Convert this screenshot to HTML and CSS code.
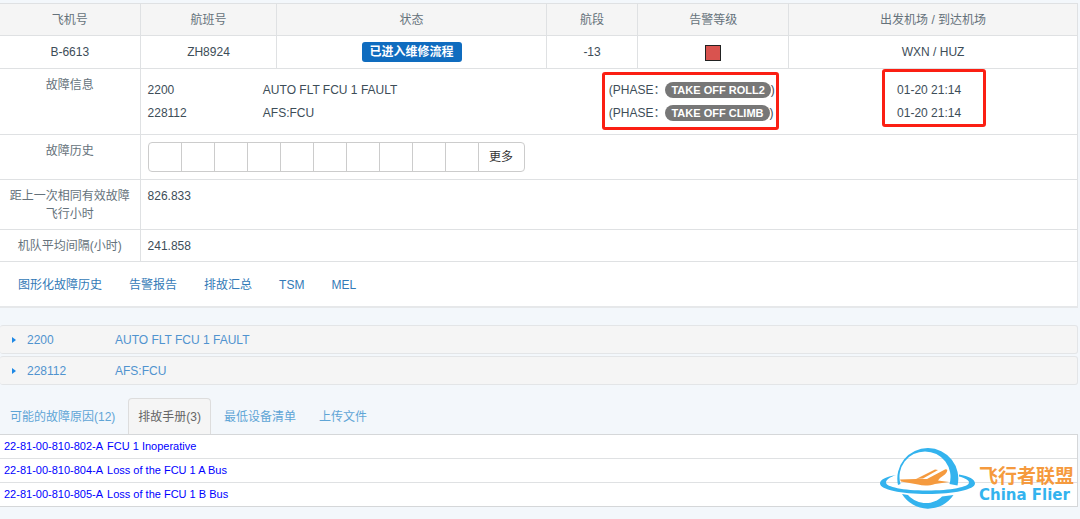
FILE: index.html
```
<!doctype html>
<html lang="zh-CN">
  <head>
    <meta charset="UTF-8" />
    <meta name="viewport" content="width=device-width, initial-scale=1.0" />
    <title>B-6613 故障信息</title>
    <link rel="stylesheet" href="styles.css">
  </head>
  <body>
    <main class="page">
      <table class="fault-table">
        <colgroup>
          <col class="col-plane">
          <col class="col-flight">
          <col class="col-status">
          <col class="col-leg">
          <col class="col-level">
          <col class="col-airport">
        </colgroup>
        <thead>
          <tr>
            <th scope="col">飞机号</th>
            <th scope="col">航班号</th>
            <th scope="col">状态</th>
            <th scope="col">航段</th>
            <th scope="col">告警等级</th>
            <th scope="col">出发机场 / 到达机场</th>
          </tr>
        </thead>
        <tbody>
          <tr class="summary">
            <td>B-6613</td>
            <td>ZH8924</td>
            <td><span class="status-label">已进入维修流程</span></td>
            <td>-13</td>
            <td><span class="level-box"></span></td>
            <td>WXN / HUZ</td>
          </tr>
          <tr>
            <th scope="row">故障信息</th>
            <td colspan="5">
              <div class="fault-info">
                <div>
                  <p>2200</p>
                  <p>228112</p>
                </div>
                <div>
                  <p>AUTO FLT FCU 1 FAULT</p>
                  <p>AFS:FCU</p>
                </div>
                <div>
                  <div class="marked marked-phase">
                    <p>(PHASE：<span class="badge">TAKE OFF ROLL2</span>)</p>
                    <p>(PHASE：<span class="badge">TAKE OFF CLIMB</span>)</p>
                  </div>
                </div>
                <div>
                  <div class="marked marked-time">
                    <p>01-20 21:14</p>
                    <p>01-20 21:14</p>
                  </div>
                </div>
              </div>
            </td>
          </tr>
          <tr>
            <th scope="row">故障历史</th>
            <td colspan="5">
              <div class="btn-group">
                <button type="button" aria-label="1"></button>
                <button type="button" aria-label="2"></button>
                <button type="button" aria-label="3"></button>
                <button type="button" aria-label="4"></button>
                <button type="button" aria-label="5"></button>
                <button type="button" aria-label="6"></button>
                <button type="button" aria-label="7"></button>
                <button type="button" aria-label="8"></button>
                <button type="button" aria-label="9"></button>
                <button type="button" aria-label="10"></button>
                <button type="button" class="more">更多</button>
              </div>
            </td>
          </tr>
          <tr>
            <th scope="row">距上一次相同有效故障飞行小时</th>
            <td colspan="5">826.833</td>
          </tr>
          <tr>
            <th scope="row">机队平均间隔(小时)</th>
            <td colspan="5">241.858</td>
          </tr>
        </tbody>
      </table>
      <nav class="links">
        <a href="#">图形化故障历史</a>
        <a href="#">告警报告</a>
        <a href="#">排故汇总</a>
        <a href="#">TSM</a>
        <a href="#">MEL</a>
      </nav>

      <section class="accordion">
        <details>
          <summary><span class="code">2200</span>AUTO FLT FCU 1 FAULT</summary>
        </details>
        <details>
          <summary><span class="code">228112</span>AFS:FCU</summary>
        </details>
      </section>

      <nav class="tabs">
        <a href="#">可能的故障原因(12)</a>
        <a href="#" class="active">排故手册(3)</a>
        <a href="#">最低设备清单</a>
        <a href="#">上传文件</a>
      </nav>
      <div class="manual">
        <ul>
          <li><a href="#"><span>22-81-00-810-802-A</span><span>FCU 1 Inoperative</span></a></li>
          <li><a href="#"><span>22-81-00-810-804-A</span><span>Loss of the FCU 1 A Bus</span></a></li>
          <li><a href="#"><span>22-81-00-810-805-A</span><span>Loss of the FCU 1 B Bus</span></a></li>
        </ul>
        <!-- Site watermark, sits over the list -->
        <div class="watermark">
          <svg width="96" height="62" viewBox="0 0 96 62" aria-hidden="true">
            <g fill="#33b3ee">
              <path d="M18 37A30.5 30.5 0 1 1 77.500 37.500L69.500 36A25.500 25.500 0 1 0 20.500 36z"/>
              <path d="M22 46A30.500 30.500 0 0 0 73.500 47L62 48.500C54 57 38 58 28 47z"/>
              <path d="M16 27C6 29 0 31.500 0 35.500 0 41.500 21 46 47.500 46S95 41.500 95 35.500c0-4-6-7.500-16-9v2c6 1.500 10 3.500 10 6 0 4.500-18 8-42 8S6 39 6 34.500c0-2.500 4-5.500 10-7.500z"/>
            </g>
            <g fill="#f59a3e">
              <path d="M20 31.500L36 31 47 31 64 22c2-1.500 4-.5 3 1.500-1 3-5 5-7 6.500l-2 2.500 11 1.500-14 2c-6 2-12 2-17 .5L21 33.500z"/>
              <path d="M36 31L55 21.500l3 .5-15 8.500z"/>
            </g>
          </svg>
          <div class="watermark-text">
            <span class="cn">飞行者联盟</span>
            <span class="en">China Flier</span>
          </div>
        </div>
      </div>
    </main>
  </body>
</html>
```
FILE: styles.css
```
* {
  box-sizing: border-box;
}

body {
  margin: 0;
  padding: 3px 2px 12px 0;
  background-color: #f3f7fb;
  color: #3d4d58;
  font-family: "Liberation Sans", "Noto Sans CJK SC", sans-serif;
  font-size: 12px;
  line-height: 18px;
}

p {
  margin: 0;
}

a {
  text-decoration: none;
}

.fault-table {
  width: 100%;
  table-layout: fixed;
  border-collapse: collapse;
  background-color: #fff;
}

.col-plane { width: 13%; }
.col-flight { width: 12.7%; }
.col-status { width: 25%; }
.col-leg { width: 8.5%; }
.col-level { width: 14%; }
.col-airport { width: 26.8%; }

.fault-table th,
.fault-table td {
  padding: 7px 7px 6px;
  border: 1px solid #dfe1e3;
  text-align: left;
  vertical-align: top;
}

.fault-table th:first-child,
.fault-table td:first-child {
  border-left: none;
}

.fault-table th {
  font-weight: normal;
  text-align: center;
  color: #65727b;
}

.fault-table thead th {
  background-color: #f5f5f5;
}

.fault-table .summary td {
  height: 33px;
  padding: 6px 7px;
  text-align: center;
  vertical-align: middle;
}

.status-label {
  display: inline-block;
  padding: 0 8px;
  line-height: 20px;
  border-radius: 3px;
  background-color: #0f6cbf;
  color: #fff;
  font-weight: bold;
  vertical-align: middle;
}

.level-box {
  display: inline-block;
  width: 16px;
  height: 16px;
  border: 1px solid #222;
  background-color: #d9534f;
  vertical-align: middle;
}

/* Code / name / phase / time */
.fault-info {
  display: grid;
  grid-template-columns: 50fr 150fr 125fr 75fr;
  padding: 3px 0;
  line-height: 23px;
}

.marked {
  position: relative;
  width: max-content;
  white-space: nowrap;
}

.marked::after {
  content: '';
  position: absolute;
  inset: -7px -4px -5px -7px;
  border: 3px solid #fb1f13;
  border-radius: 3px;
}

.marked-time::after {
  inset: -10px -25px -2px -15px;
}

.badge {
  display: inline-block;
  padding: 0 6px;
  border-radius: 8px;
  background-color: #777;
  color: #fff;
  font-size: 11px;
  font-weight: bold;
  line-height: 16px;
}

.btn-group {
  display: flex;
  padding-bottom: 1px;
}

.btn-group button {
  width: 34px;
  height: 30px;
  margin: 0 -1px 0 0;
  padding: 0;
  border: 1px solid #ccc;
  background-color: #fff;
  color: #333;
  font: inherit;
}

.btn-group button:first-child {
  border-radius: 4px 0 0 4px;
}

.btn-group .more {
  width: 47px;
  border-radius: 0 4px 4px 0;
}

.links {
  display: flex;
  gap: 27px;
  padding: 14px 18px 12px;
  border: 1px solid #e6e8ea;
  border-width: 0 1px 2px 0;
  background-color: #fff;
}

.links a {
  color: #337ab7;
}

.accordion {
  display: grid;
  gap: 2px;
  margin-top: 17px;
}

.accordion summary {
  display: flex;
  align-items: center;
  height: 29px;
  padding-left: 12px;
  border: 1px solid #e3e5e7;
  border-left: none;
  border-radius: 3px;
  background-color: #f5f5f5;
  color: #5093cf;
  cursor: pointer;
}

.accordion summary::before {
  content: '';
  margin-right: 11px;
  border: solid transparent;
  border-width: 3px 0 3px 4px;
  border-left-color: #1e88e5;
}

.accordion .code {
  width: 88px;
}

.tabs {
  display: flex;
  gap: 3px;
  margin-top: 13px;
}

.tabs a {
  padding: 9px 9px 8px;
  border: 1px solid transparent;
  border-bottom: none;
  border-radius: 4px 4px 0 0;
  color: #5fa5d6;
}

.tabs .active {
  border-color: #ddd;
  background-color: #f5f5f5;
  color: #666;
}

.manual {
  position: relative;
}

.manual ul {
  margin: 0;
  padding: 0;
  list-style: none;
  border: 1px solid #d5d7d9;
  border-left: none;
  background-color: #fff;
}

.manual li + li {
  border-top: 1px solid #dfe1e3;
}

.manual li a {
  display: flex;
  gap: 4px;
  padding: 0 4px;
  color: #0000ff;
  font-size: 11px;
  line-height: 23px;
}

.watermark {
  position: absolute;
  right: 4px;
  bottom: -3px;
  display: flex;
  align-items: center;
  gap: 3px;
}

.watermark-text {
  display: grid;
  margin-top: 12px;
  font-weight: bold;
}

.watermark .cn {
  color: #f59a3e;
  font-size: 19px;
  line-height: 20px;
}

.watermark .en {
  color: #33b3ee;
  font-family: "DejaVu Sans", sans-serif;
  font-size: 15px;
  line-height: 16px;
}
```
